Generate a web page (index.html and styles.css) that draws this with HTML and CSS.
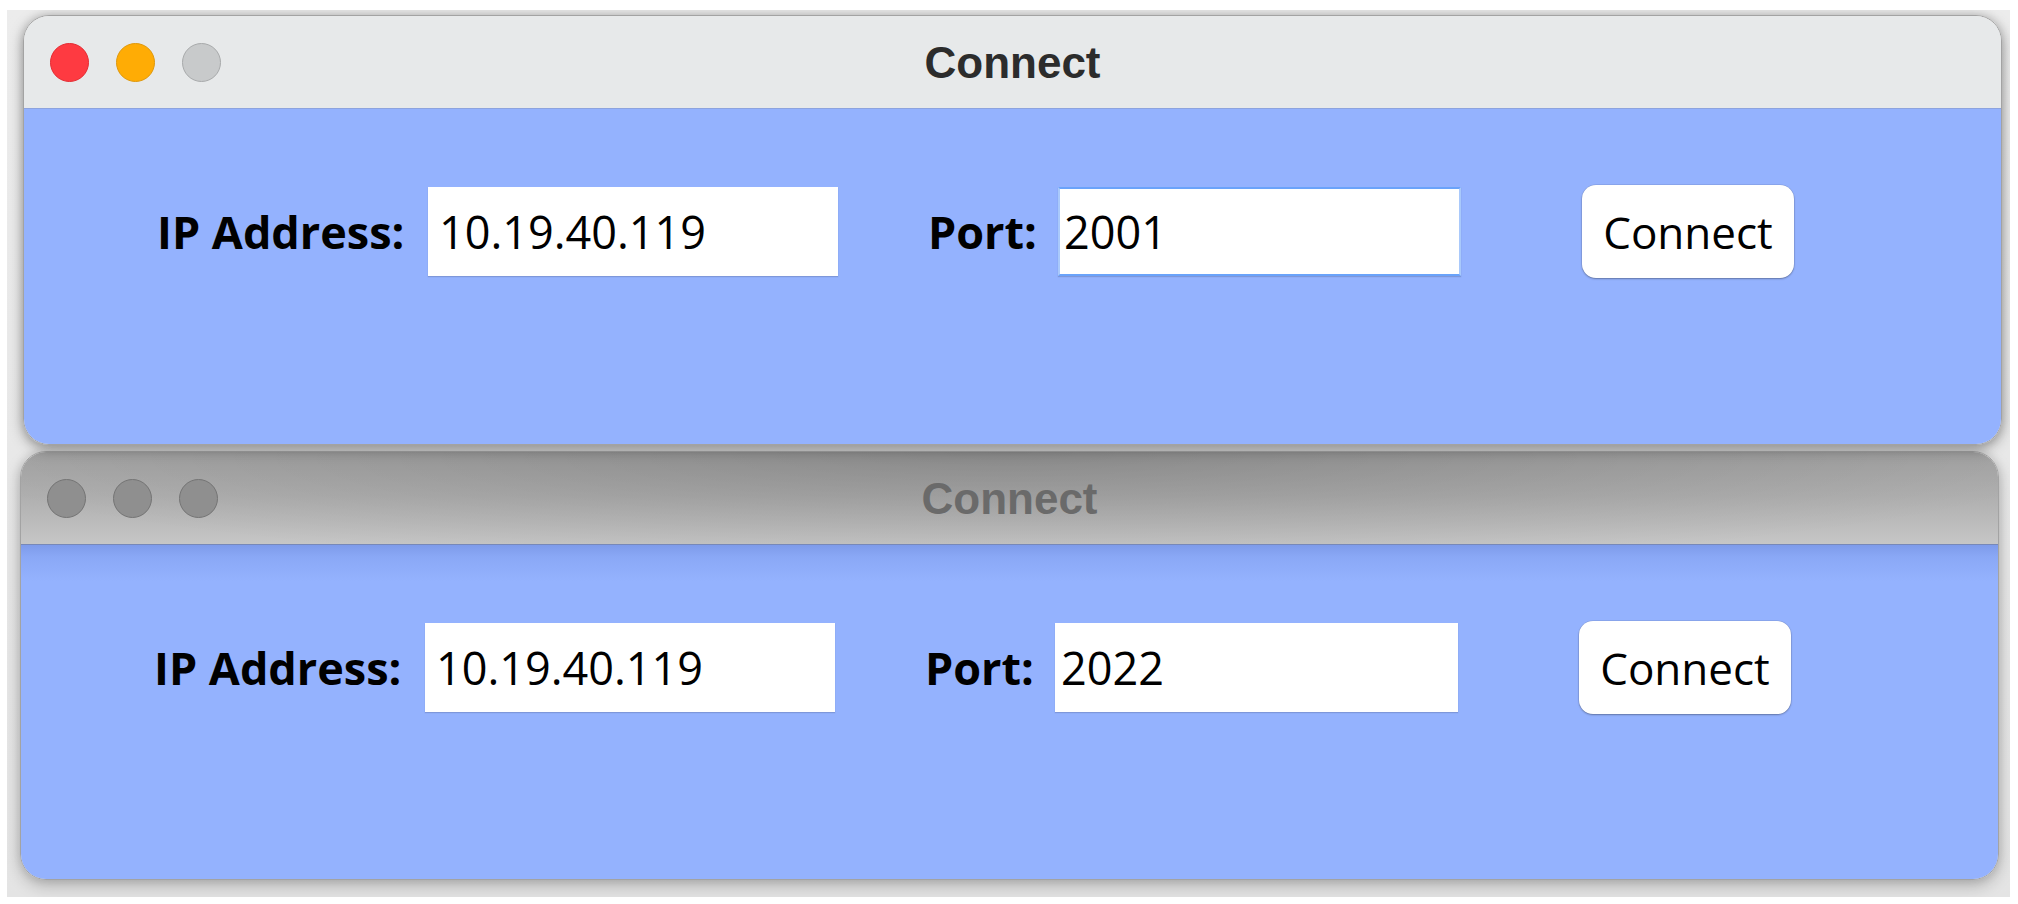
FILE: index.html
```html
<!DOCTYPE html>
<html lang="en">
<head>
<meta charset="utf-8">
<title>Connect</title>
<link rel="stylesheet" href="styles.css">
</head>
<body>
<div class="backdrop">
  <div class="window window-active">
    <div class="titlebar">
      <div class="lights">
        <span class="light light-close"></span>
        <span class="light light-min"></span>
        <span class="light light-zoom"></span>
      </div>
      <div class="title">Connect</div>
    </div>
    <div class="content">
      <div class="row">
        <label class="label label-ip">IP Address:</label>
        <div class="field field-ip">10.19.40.119</div>
        <label class="label label-port">Port:</label>
        <div class="field field-port field-focus">2001</div>
        <button class="btn">Connect</button>
      </div>
    </div>
  </div>
  <div class="window window-inactive">
    <div class="titlebar">
      <div class="lights">
        <span class="light"></span>
        <span class="light"></span>
        <span class="light"></span>
      </div>
      <div class="title">Connect</div>
    </div>
    <div class="content">
      <div class="row">
        <label class="label label-ip">IP Address:</label>
        <div class="field field-ip">10.19.40.119</div>
        <label class="label label-port">Port:</label>
        <div class="field field-port">2022</div>
        <button class="btn">Connect</button>
      </div>
    </div>
  </div>
</div>
</body>
</html>
```
FILE: styles.css
```css
* { box-sizing: border-box; }
html, body { margin: 0; padding: 0; background: #ffffff; }
body { width: 2018px; height: 904px; overflow: hidden; }

.backdrop {
  margin: 10px 0 0 7px;
  width: 2003px;
  height: 887px;
  background: linear-gradient(to bottom, #ececec, #e4e4e4);
  overflow: hidden;
  display: flex;
  flex-direction: column;
}

.window {
  width: 1979px;
  border-radius: 26px;
  overflow: hidden;
  display: flex;
  flex-direction: column;
  border: 1px solid #a3a3a3;
  position: relative;
}
.window-active {
  margin: 5px 0 0 16px;
  height: 430px;
  z-index: 2;
  box-shadow: 0 4px 14px rgba(0,0,0,0.35), 0 0 10px rgba(0,0,0,0.12);
}
.window-inactive {
  margin: 6px 0 0 13px;
  height: 429px;
  z-index: 1;
  box-shadow: 0 6px 16px rgba(0,0,0,0.22), 0 0 10px rgba(0,0,0,0.12);
}

.titlebar {
  height: 93px;
  flex: none;
  display: flex;
  align-items: center;
  position: relative;
  border-bottom: 1px solid #8da3de;
}
.window-active .titlebar { background: #e7e9ea; }
.window-inactive .titlebar {
  background:
    radial-gradient(ellipse 55% 130% at 50% 0%, rgba(0,0,0,0.16), rgba(0,0,0,0) 100%),
    linear-gradient(to bottom, #a2a2a2 0%, #b0b0b0 50%, #c6c6c6 100%);
  border-bottom-color: #7788b8;
}

.lights {
  display: flex;
  gap: 27px;
  padding-left: 26px;
  padding-top: 1px;
}
.light {
  width: 39px;
  height: 39px;
  border-radius: 50%;
  background: #8f8f8f;
  border: 1px solid #747474;
}
.light-close { background: #fe3a41; border-color: #e42b32; }
.light-min { background: #ffac05; border-color: #df980b; }
.light-zoom { background: #c8cacb; border-color: #a8aaab; }

.title {
  position: absolute;
  left: 0; right: 0; top: 0; bottom: 0;
  display: flex;
  align-items: center;
  justify-content: center;
  font-family: "Liberation Sans", Arial, sans-serif;
  font-weight: bold;
  font-size: 44px;
  color: #2c2c2c;
  padding-top: 1px;
  pointer-events: none;
}
.window-inactive .title { color: #6a6a6a; }

.content {
  flex: 1;
  background: #94b2fe;
}
.window-inactive .content {
  background: linear-gradient(to bottom, #7e9bea 0px, #8aa8f6 12px, #94b2fe 36px);
}

.row {
  display: flex;
  align-items: center;
  padding: 76px 0 0 133px;
  font-family: "Open Sans", "Noto Sans", sans-serif;
  font-size: 45px;
  color: #000;
}

.label {
  font-weight: bold;
  flex: none;
}
.label-ip { width: 271px; }
.label-port { width: 130px; margin-left: 90px; }

.field {
  flex: none;
  height: 89px;
  background: #ffffff;
  display: flex;
  align-items: center;
  box-shadow: 0 1px 1px rgba(60,70,110,0.25);
  line-height: 1;
}
.field-ip { width: 410px; padding-left: 11px; }
.field-port { width: 403px; padding-left: 6px; }
.field-focus {
  border: 2px solid #6aa3fa;
  border-left-color: #a9c9fb;
  border-right-color: #a9c9fb;
  padding-left: 4px;
}

.btn {
  flex: none;
  margin-left: 121px;
  width: 212px;
  height: 93px;
  background: #ffffff;
  border: none;
  border-radius: 14px;
  box-shadow: 0 1px 2px rgba(0,0,0,0.3), 0 0 0 0.5px rgba(0,0,0,0.12);
  font-family: "Open Sans", "Noto Sans", sans-serif;
  font-size: 44px;
  color: #000;
  padding: 0;
}
```
